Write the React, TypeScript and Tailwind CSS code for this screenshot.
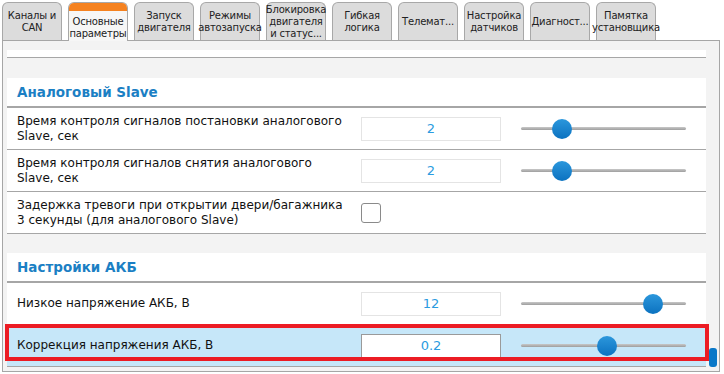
import React from 'react';

const tabs = [
  { label: ['Каналы и', 'CAN'] },
  { label: ['Основные', 'параметры'], active: true },
  { label: ['Запуск', 'двигателя'] },
  { label: ['Режимы', 'автозапуска'] },
  { label: ['Блокировка', 'двигателя', 'и статус...'] },
  { label: ['Гибкая', 'логика'] },
  { label: ['Телемат...'] },
  { label: ['Настройка', 'датчиков'] },
  { label: ['Диагност...'] },
  { label: ['Памятка', 'установщика'] },
];

function Tab({ label, active }: { label: string[]; active?: boolean }) {
  if (active) {
    return (
      <div className="relative z-10 w-[60px] h-[39px] -mb-[1px] flex flex-col rounded-t-[6px] border border-b-0 border-[#a8a8a8] bg-[#f6f6f6] overflow-hidden">
        <div className="h-[8px] bg-[#f58220] shrink-0" />
        <div className="flex-1 flex flex-col items-center justify-center pt-[3px] text-[10px] leading-[12px] tracking-[-0.2px] text-[#222]">
          {label.map((l) => (
            <span key={l} className="whitespace-nowrap">{l}</span>
          ))}
        </div>
      </div>
    );
  }
  return (
    <div className="w-[60px] h-[38px] flex flex-col items-center justify-center rounded-t-[6px] border border-b-0 border-[#a8a8a8] bg-[#dcdcdc] text-[10px] leading-[12px] tracking-[-0.2px] text-[#222]">
      {label.map((l) => (
        <span key={l} className="whitespace-nowrap">{l}</span>
      ))}
    </div>
  );
}

function Slider({ pos }: { pos: number }) {
  return (
    <div className="relative w-[165px] h-[20px] flex items-center">
      <div className="w-full h-[3px] rounded-full bg-gradient-to-b from-[#c8c8c8] to-[#9e9e9e]" />
      <div
        className="absolute top-0 w-[20px] h-[20px] rounded-full bg-gradient-to-b from-[#2b97dc] to-[#0a72c0]"
        style={{ left: pos - 10 }}
      />
    </div>
  );
}

function Row({
  label,
  value,
  pos,
  checkbox,
  highlight,
}: {
  label: string[];
  value?: string;
  pos?: number;
  checkbox?: boolean;
  highlight?: boolean;
}) {
  return (
    <div
      className={`relative h-[42px] shrink-0 flex items-center border-b border-[#a6a6a6] ${
        highlight ? 'bg-[#c6e7f9]' : 'bg-white'
      }`}
    >
      <div className="w-[354px] pl-[10px] text-[12px] leading-[15px] text-[#111]">
        {label.map((l) => (
          <div key={l} className="whitespace-nowrap">{l}</div>
        ))}
      </div>
      {checkbox ? (
        <div className="w-[20px] h-[20px] rounded-[3px] border border-[#8a8a8a] bg-white" />
      ) : (
        <>
          <div
            className={`w-[140px] h-[24px] flex items-center justify-center bg-white border text-[13px] text-[#2b9be0] ${
              highlight ? 'border-[#9a9a9a]' : 'border-[#e4e4e4]'
            }`}
          >
            {value}
          </div>
          <div className="ml-[20px]">
            <Slider pos={pos ?? 0} />
          </div>
        </>
      )}
      {highlight && (
        <div className="absolute -left-[2px] -right-[3px] -top-[1px] bottom-[5px] border-4 border-[#ec1c24] pointer-events-none" />
      )}
    </div>
  );
}

function SectionHeader({ title }: { title: string }) {
  return (
    <div className="h-[30px] shrink-0 flex items-center pl-[10px] bg-white border-b-2 border-[#a6a6a6] text-[13.5px] font-bold text-[#1b7fc4]">
      {title}
    </div>
  );
}

export default function App() {
  return (
    <div
      className="w-[724px] h-[374px] bg-white overflow-hidden"
      style={{ fontFamily: '"DejaVu Sans", Verdana, sans-serif' }}
    >
      <div className="h-[40px] flex items-end gap-[6px] pl-[2px]">
        {tabs.map((t, i) => (
          <Tab key={i} label={t.label} active={t.active} />
        ))}
      </div>
      <div className="ml-[2px] w-[718px] h-[332px] border border-[#a6a6a6] bg-[#f3f3f3] flex overflow-hidden">
        <div className="w-[703px] pl-[4px] flex flex-col">
          <div className="mt-[9px] h-[8px] shrink-0 bg-white border-b border-[#a6a6a6]" />
          <div className="h-[20px] shrink-0" />
          <SectionHeader title="Аналоговый Slave" />
          <Row label={['Время контроля сигналов постановки аналогового', 'Slave, сек']} value="2" pos={41} />
          <Row label={['Время контроля сигналов снятия аналогового', 'Slave, сек']} value="2" pos={41} />
          <Row label={['Задержка тревоги при открытии двери/багажника', '3 секунды (для аналогового Slave)']} checkbox />
          <div className="h-[19px] shrink-0" />
          <SectionHeader title="Настройки АКБ" />
          <Row label={['Низкое напряжение АКБ, В']} value="12" pos={132} />
          <Row label={['Коррекция напряжения АКБ, В']} value="0.2" pos={86} highlight />
        </div>
        <div className="flex-1 flex flex-col justify-end pb-[4px] pl-[3px]">
          <div className="w-[8px] h-[19px] rounded-[3px] bg-[#0a78c8]" />
        </div>
      </div>
    </div>
  );
}
